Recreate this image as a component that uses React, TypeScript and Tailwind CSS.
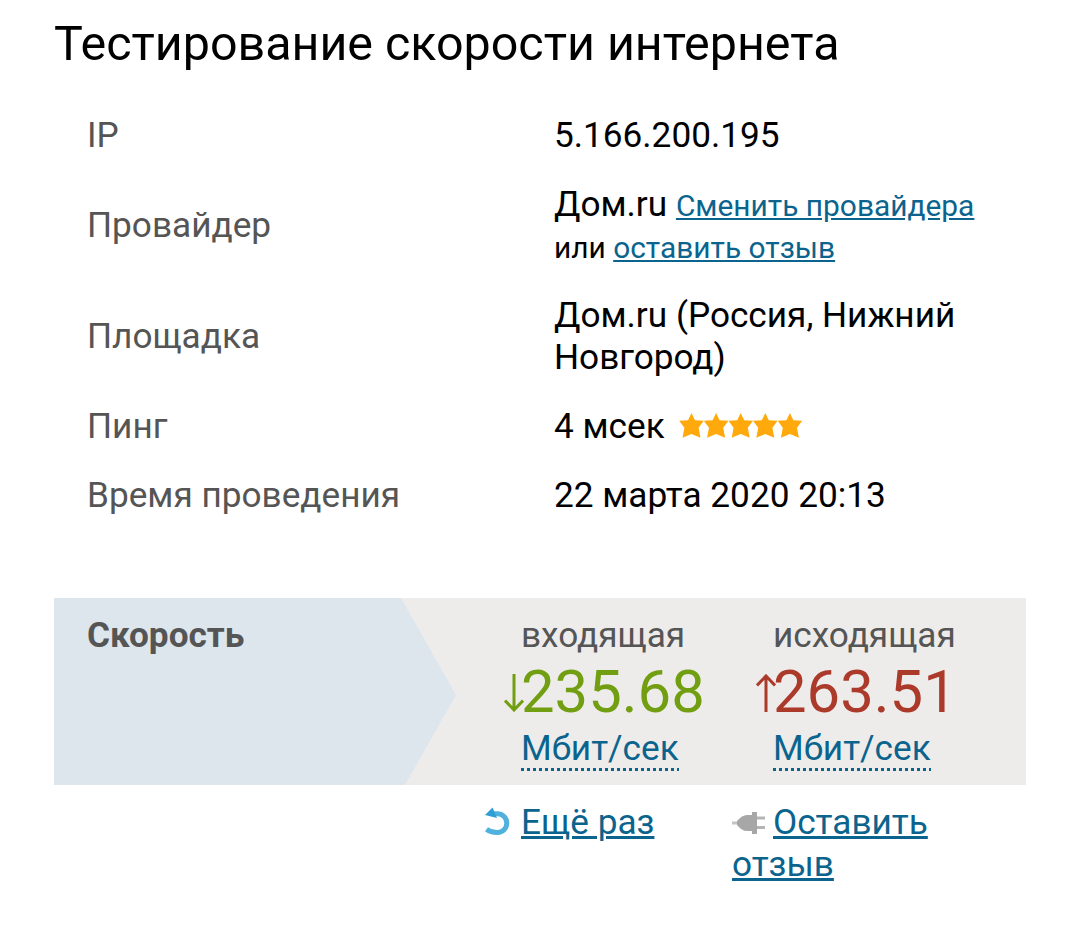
const rowLabel = "w-[467px] shrink-0 text-[#555]";
const link = "text-[#0b648d] underline";
const bigLink = "text-[#0b648d] underline decoration-[3px]";

const Star = ({ x }: { x: number }) => (
  <path
    transform={`translate(${x} 0)`}
    d="M12.5 1 L16 8.3 L24.8 8.8 L19.6 15.8 L21.5 25.8 L12.5 22 L3.5 25.8 L5.4 15.8 L.2 8.8 L9 8.3 Z"
  />
);

const ArrowDown = ({ className }: { className: string }) => (
  <svg className={className} width="20" height="38" viewBox="0 0 20 38" fill="none" stroke="currentColor" strokeWidth="3">
    <path d="M10 0 V36 M1 26.5 L10 36 L19 26.5" />
  </svg>
);

const RefreshIcon = () => (
  <svg width="28" height="32" viewBox="0 0 28 32" fill="none">
    <path d="M9 7.8 H14.5 A9.3 9.3 0 0 1 14.5 26.4 Q8 26.6 3.5 23.2" stroke="#50b2dc" strokeWidth="5" />
    <path d="M2 9 L9.5 1.5 L14 12 Z" fill="#2e9fd4" />
  </svg>
);

const PlugIcon = () => (
  <svg width="34" height="24" viewBox="0 0 34 24" fill="#a7a7a7">
    <path d="M0 10.5 H7 V13.5 H0 Z" fill="#c4c4c4" />
    <path d="M5 10 Q10 4 15 4 H20 V1 H25 V23 H20 V20 H15 Q10 20 5 14 Z" />
    <path d="M25 5.5 H33 V8.5 H25 Z M25 15 H33 V18 H25 Z" fill="#b5b5b5" />
  </svg>
);

const Unit = () => (
  <div className="relative -mt-px w-[158px] text-[#0b648d]">
    Мбит/сек
    <div className="absolute bottom-[-2px] left-0 h-[3px] w-full bg-[repeating-linear-gradient(90deg,#0b648d_0_3px,transparent_3px_6px)]" />
  </div>
);

const App = () => {
  return (
    <div className="h-[941px] w-[1080px] overflow-hidden bg-white font-[Roboto,sans-serif] text-[35.18px] leading-[42px] text-black">
      <h1 className="pt-[16px] pl-[54px] text-[48.4px] leading-[56px]">Тестирование скорости интернета</h1>

      <div className="flex flex-col gap-[27px] pt-[42px] pl-[87px]">
        <div className="flex">
          <div className={rowLabel}>IP</div>
          <div>5.166.200.195</div>
        </div>
        <div className="flex items-center">
          <div className={rowLabel}>Провайдер</div>
          <div className="whitespace-nowrap">
            Дом.ru{" "}
            <span className="text-[29.88px] leading-[34px]">
              <a className={link}>Сменить провайдера</a>
              <br />
              или <a className={link}>оставить отзыв</a>
            </span>
          </div>
        </div>
        <div className="flex items-center">
          <div className={rowLabel}>Площадка</div>
          <div>
            Дом.ru (Россия, Нижний
            <br />
            Новгород)
          </div>
        </div>
        <div className="flex">
          <div className={rowLabel}>Пинг</div>
          <div className="flex items-center">
            4 мсек
            <svg className="ml-[14px]" width="126" height="28" viewBox="0 0 126 28" fill="#ffa90c">
              {[0, 24.6, 49.2, 73.8, 98.4].map((x) => (
                <Star key={x} x={x} />
              ))}
            </svg>
          </div>
        </div>
        <div className="flex">
          <div className={rowLabel}>Время проведения</div>
          <div>22 марта 2020 20:13</div>
        </div>
      </div>

      <div className="mt-[82px] ml-[54px] flex h-[187px] w-[972px] bg-[#eeeceb] text-[#555]">
        <div className="h-full w-[402px] bg-[#dde6ed] pt-[16px] pl-[33px] font-bold [clip-path:polygon(0_0,347px_0,402px_97px,351px_100%,0_100%)]">
          Скорость
        </div>
        <div className="ml-[65px] w-[252px] pt-[16px]">
          <div>входящая</div>
          <div className="relative text-[59.8px] leading-[72px] text-[#729f12]">
            <ArrowDown className="absolute top-[18px] left-[-17px]" />
            235.68
          </div>
          <Unit />
        </div>
        <div className="pt-[16px]">
          <div>исходящая</div>
          <div className="relative text-[59.8px] leading-[72px] text-[#ac3a2b]">
            <ArrowDown className="absolute top-[18px] left-[-17px] rotate-180" />
            263.51
          </div>
          <Unit />
        </div>
      </div>

      <div className="flex pt-[16px] pl-[483px]">
        <div className="flex w-[249px] gap-[10px]">
          <div className="pt-[5px]">
            <RefreshIcon />
          </div>
          <a className={bigLink}>Ещё раз</a>
        </div>
        <div className="w-[220px]">
          <span className="mr-[7px] inline-block align-[-1px]">
            <PlugIcon />
          </span>
          <a className={bigLink}>Оставить отзыв</a>
        </div>
      </div>
    </div>
  );
};

export default App;
